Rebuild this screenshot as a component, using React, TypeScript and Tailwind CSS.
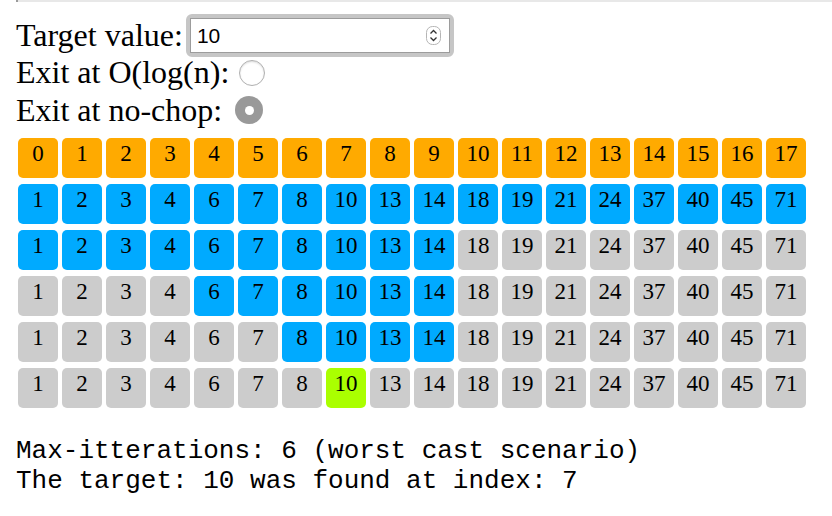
import React from "react";

/* binary search trace, drawn as a grid of cells */

const VALUES = [1, 2, 3, 4, 6, 7, 8, 10, 13, 14, 18, 19, 21, 24, 37, 40, 45, 71];

// [lo, hi] window still in play for each step; the last row marks the hit
const STEPS: Array<[number, number]> = [
  [0, 17],
  [0, 9],
  [4, 9],
  [6, 9],
];
const FOUND = 7;

const cell = "w-[40px] h-[40px] rounded-[5px] text-center text-[23px] leading-[26px] pt-[3px] text-black";

function Cell({ label, tone }: { label: number; tone: "orange" | "blue" | "gray" | "green" }) {
  const bg =
    tone === "orange" ? "bg-[#ffaa00]" : tone === "blue" ? "bg-[#00aaff]" : tone === "green" ? "bg-[#aaff00]" : "bg-[#cccccc]";
  return <div className={`${cell} ${bg}`}>{label}</div>;
}

function Spinner() {
  return (
    <svg width="15" height="19" viewBox="0 0 15 19" className="mr-[8px]">
      <rect x="0.5" y="0.5" width="14" height="18" rx="6" fill="#fff" stroke="#b5b5b5" />
      <path d="M4.5 7.5 L7.5 4.5 L10.5 7.5" fill="none" stroke="#333" strokeWidth="1.3" />
      <path d="M4.5 11.5 L7.5 14.5 L10.5 11.5" fill="none" stroke="#333" strokeWidth="1.3" />
    </svg>
  );
}

export default function App() {
  return (
    <div className="w-[832px] h-[516px] bg-white overflow-hidden" style={{ fontFamily: '"Liberation Serif", serif' }}>
      {/* leftover rule from the section above */}
      <div className="ml-[16px] h-[2px] bg-[#e8e8e8] border-l-2 border-[#9a9a9a]" />

      <div className="pl-[16px] mt-[15px] text-[32px] leading-[37px] text-black">
        <div className="flex items-center h-[37px]">
          <span>Target value:</span>
          <div className="ml-[3px] w-[268px] h-[43px] rounded-[6px] border-[4px] border-[#c6c6c6] bg-[#d9d9d9]">
            <div className="w-full h-full bg-white border border-[#9c9c9c] flex items-center justify-between">
              <span className="pl-[6px] text-[21px] leading-none" style={{ fontFamily: '"Liberation Sans", Arial, sans-serif' }}>
                10
              </span>
              <Spinner />
            </div>
          </div>
        </div>
        <div className="flex items-center h-[37px]">
          <span>Exit at O(log(n):</span>
          <span className="ml-[10px] w-[26px] h-[26px] rounded-full border border-[#b0b0b0] bg-white shadow-[inset_0_1px_2px_rgba(0,0,0,0.15)]" />
        </div>
        <div className="flex items-center h-[38px]">
          <span>Exit at no-chop:</span>
          <span className="ml-[13px] w-[28px] h-[28px] rounded-full bg-[#999999] flex items-center justify-center">
            <span className="w-[9px] h-[9px] rounded-full bg-white" />
          </span>
        </div>
      </div>

      <div className="pl-[18px] mt-[9px] flex flex-col gap-y-[6px]">
        <div className="flex gap-x-[4px]">
          {VALUES.map((_, i) => (
            <Cell key={i} label={i} tone="orange" />
          ))}
        </div>
        {STEPS.map(([lo, hi], r) => (
          <div key={r} className="flex gap-x-[4px]">
            {VALUES.map((v, i) => (
              <Cell key={i} label={v} tone={i >= lo && i <= hi ? "blue" : "gray"} />
            ))}
          </div>
        ))}
        <div className="flex gap-x-[4px]">
          {VALUES.map((v, i) => (
            <Cell key={i} label={v} tone={i === FOUND ? "green" : "gray"} />
          ))}
        </div>
      </div>

      <div className="pl-[16px] mt-[28px] text-[26px] leading-[30px] text-black whitespace-pre" style={{ fontFamily: '"Liberation Mono", monospace' }}>
        <div>Max-itterations: 6 (worst cast scenario)</div>
        <div>The target: 10 was found at index: 7</div>
      </div>
    </div>
  );
}
